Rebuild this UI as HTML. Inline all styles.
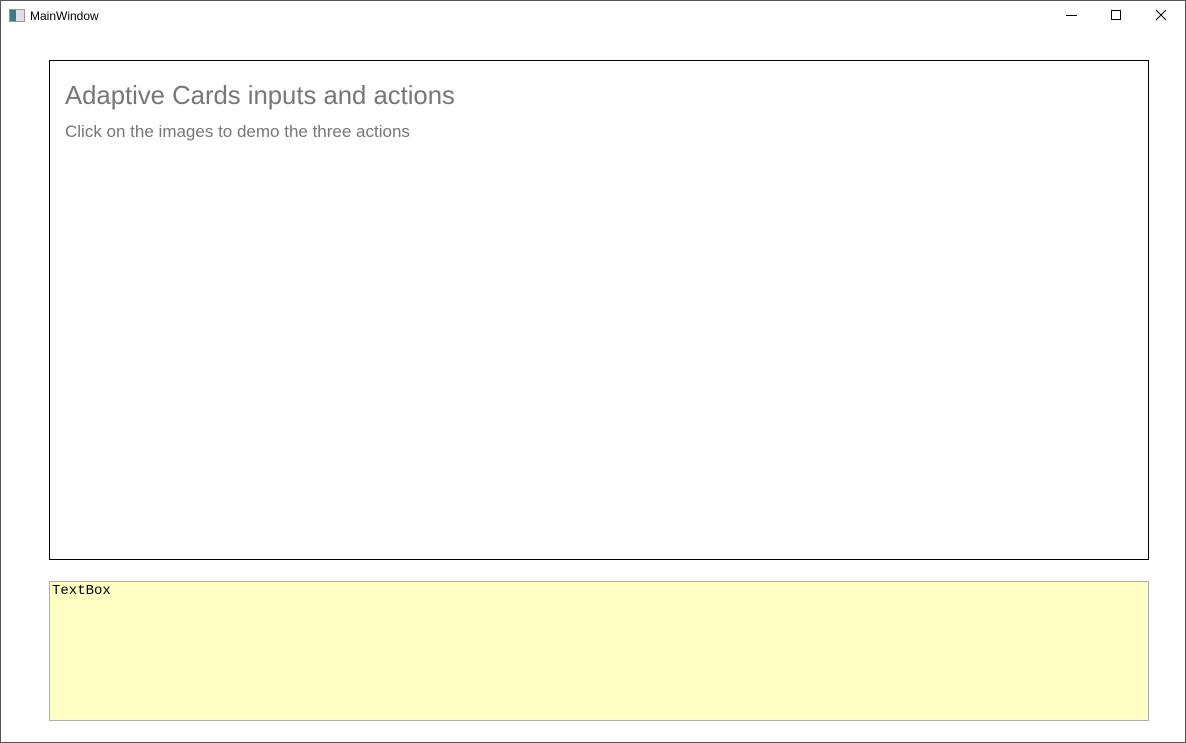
<!DOCTYPE html>
<html><head><style>
html,body{margin:0;padding:0;width:1186px;height:743px;overflow:hidden;background:#fff;font-family:"Liberation Sans",sans-serif;}
.win{position:absolute;left:0;top:0;width:1184px;height:741px;border:1px solid #555;}
.title{position:absolute;left:30px;top:9px;font-size:12px;color:#000;}
.icon{position:absolute;left:9px;top:9px;width:14px;height:11px;border:1px solid #999;background:linear-gradient(90deg,#3a7a8a 0 6px,#dde 6px);}
.card{position:absolute;left:49px;top:60px;width:1098px;height:498px;border:1px solid #000;}
.h1{position:absolute;left:15px;top:21px;font-size:25.7px;color:#777;white-space:nowrap;}
.h2{position:absolute;left:15px;top:61px;font-size:17px;color:#777;white-space:nowrap;}
.tb{position:absolute;left:49px;top:581px;width:1098px;height:138px;border:1px solid #abadb3;background:#ffffc4;font-family:"Liberation Mono",monospace;font-size:14px;}
.tb span{position:absolute;left:2px;top:1px;}
</style></head><body>
<div class="win"></div>
<div class="icon"></div>
<div class="title">MainWindow</div>
<svg style="position:absolute;left:1060px;top:8px" width="110" height="16">
<line x1="6" y1="7.5" x2="17" y2="7.5" stroke="#000"/>
<rect x="51.5" y="2.5" width="9" height="9" fill="none" stroke="#000"/>
<path d="M96 2 L106 12 M106 2 L96 12" stroke="#000"/>
</svg>
<div class="card">
<div class="h1">Adaptive Cards inputs and actions</div>
<div class="h2">Click on the images to demo the three actions</div>
</div>
<div class="tb"><span>TextBox</span></div>
</body></html>
